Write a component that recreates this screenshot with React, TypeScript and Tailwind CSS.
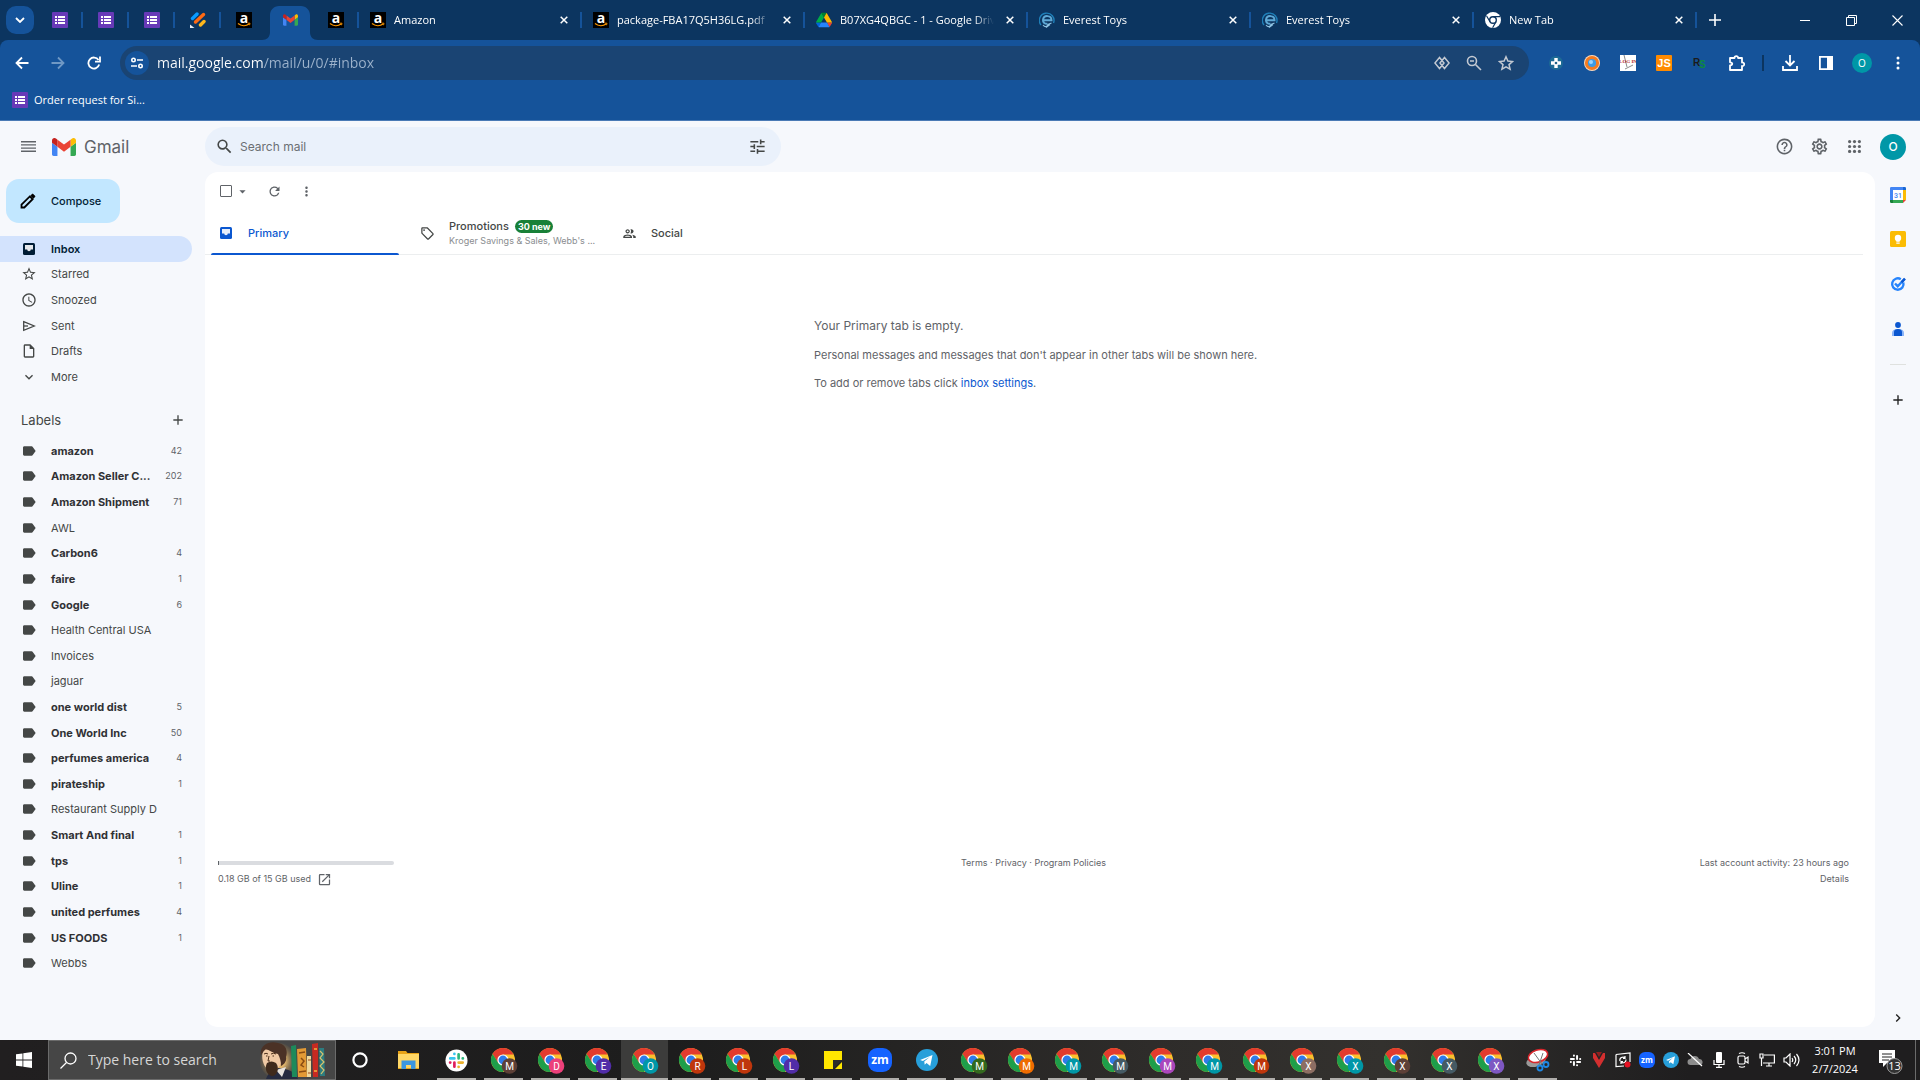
import { useState, type ReactNode } from 'react';
import {
  MdAdd,
  MdArrowDropDown,
  MdChevronRight,
  MdHelpOutline,
  MdKeyboardArrowDown,
  MdLabel,
  MdMoreVert,
  MdOpenInNew,
  MdOutlineGroup,
  MdOutlineInsertDriveFile,
  MdOutlineSell,
  MdOutlineSettings,
  MdRefresh,
  MdSchedule,
  MdSearch,
  MdStarBorder,
  MdTune,
} from 'react-icons/md';

/* ---------- favicons ---------- */

const FormsIcon = () => (
  <svg width="16" height="16" viewBox="0 0 16 16" className="shrink-0">
    <rect width="16" height="16" rx="1" fill="#673ab7" />
    <path d="M3 4h2v2H3zM3 7h2v2H3zM3 10h2v2H3zM6 4h7v2H6zM6 7h7v2H6zM6 10h7v2H6z" fill="#fff" />
  </svg>
);

const AmazonIcon = () => (
  <svg width="16" height="16" viewBox="0 0 16 16" className="shrink-0 overflow-visible">
    <rect width="16" height="16" fill="#000" />
    <text x="8" y="10.5" textAnchor="middle" fontSize="14" fontWeight="700" fill="#fff" fontFamily="Open Sans, sans-serif">
      a
    </text>
    <path d="M2 11.6c3.4 2.6 8 2.7 11 .5" fill="none" stroke="#f90" strokeWidth="1.3" />
    <path d="M11.8 11.2h2.2l-.5 2" fill="none" stroke="#f90" strokeWidth="0.9" />
  </svg>
);

const StripesIcon = () => (
  <svg width="16" height="16" viewBox="0 0 16 16" className="shrink-0" fill="none" strokeLinecap="round" strokeWidth="3.4">
    <path d="M2.5 6.5 7 2" stroke="#0a9bff" />
    <path d="M5.5 10 13.5 2.5" stroke="#ff6a13" />
    <path d="M10.5 13 14 9.5" stroke="#ffb71b" />
    <path d="M0 12.5V16h4.5z" fill="#e8edf5" stroke="none" />
  </svg>
);

const GmailMark = ({ width, height }: { width: number; height: number }) => (
  <svg width={width} height={height} viewBox="52 42 88 66" className="shrink-0">
    <path fill="#4285f4" d="M58 108h14V74L52 59v43c0 3.32 2.69 6 6 6" />
    <path fill="#34a853" d="M120 108h14c3.32 0 6-2.69 6-6V59l-20 15" />
    <path fill="#fbbc04" d="M120 48v26l20-15v-8c0-7.42-8.47-11.65-14.4-7.2" />
    <path fill="#ea4335" d="M72 74V48l24 18 24-18v26L96 92" />
    <path fill="#c5221f" d="M52 51v8l20 15V48l-5.6-4.2c-5.94-4.45-14.4-.22-14.4 7.2" />
  </svg>
);

const DriveIcon = () => (
  <svg width="16" height="16" viewBox="0 0 87.3 78" className="shrink-0">
    <path d="m6.6 66.85 3.85 6.65c.8 1.4 1.95 2.5 3.3 3.3L27.5 53H0c0 1.55.4 3.1 1.2 4.5z" fill="#0066da" />
    <path d="M43.65 25 29.9 1.2c-1.35.8-2.5 1.9-3.3 3.3L1.2 48.5C.4 49.9 0 51.45 0 53h27.5z" fill="#00ac47" />
    <path d="M73.55 76.8c1.35-.8 2.5-1.9 3.3-3.3l1.6-2.75 7.65-13.25c.8-1.4 1.2-2.95 1.2-4.5H59.8l5.85 11.5z" fill="#ea4335" />
    <path d="M43.65 25 57.4 1.2C56.05.4 54.5 0 52.9 0H34.4c-1.6 0-3.15.45-4.5 1.2z" fill="#00832d" />
    <path d="M59.8 53H27.5L13.75 76.8c1.35.8 2.9 1.2 4.5 1.2h50.8c1.6 0 3.15-.45 4.5-1.2z" fill="#2684fc" />
    <path d="m73.4 26.5-12.7-22c-.8-1.4-1.95-2.5-3.3-3.3L43.65 25 59.8 53h27.45c0-1.55-.4-3.1-1.2-4.5z" fill="#ffba00" />
  </svg>
);

const EverestIcon = () => (
  <svg width="16" height="16" viewBox="0 0 16 16" className="shrink-0" fill="none">
    <path d="M2 13A7.300 7.300 0 1 1 14.500 11" stroke="#1f7fb8" strokeWidth="1.400" />
    <path d="M4.300 8.200h8.200C12.500 3 4.500 2.600 4 8c-.2 2.500 2 4.200 4.500 3.800" stroke="#5fa9d6" strokeWidth="2" />
    <path d="M4 13c2 2.500 4 2 5-.5l3.500-1.500M7 15.500l4-3" stroke="#8fc3e3" strokeWidth="1.100" />
  </svg>
);

const ChromeMono = () => (
  <svg width="16" height="16" viewBox="0 0 16 16" className="shrink-0">
    <circle cx="8" cy="8" r="8" fill="#fff" />
    <circle cx="8" cy="8" r="3.3" fill="#fff" stroke="#0c3560" strokeWidth="1.4" />
    <path d="M8 4.6h7M5 9.8 1.6 4M11 9.8 7.6 15.7" stroke="#0c3560" strokeWidth="1.2" />
  </svg>
);

/* ---------- chrome ---------- */

const pinnedTabs = [
  { title: 'Order form 1', icon: <FormsIcon /> },
  { title: 'Order form 2', icon: <FormsIcon /> },
  { title: 'Order form 3', icon: <FormsIcon /> },
  { title: 'Stripes', icon: <StripesIcon /> },
  { title: 'Amazon pinned', icon: <AmazonIcon /> },
  { title: 'Gmail', icon: <GmailMark width={15} height={12} />, active: true },
  { title: 'Amazon orders', icon: <AmazonIcon /> },
];

const openTabs = [
  { title: 'Amazon', icon: <AmazonIcon /> },
  { title: 'package-FBA17Q5H36LG.pdf', icon: <AmazonIcon /> },
  { title: 'B07XG4QBGC - 1 - Google Drive', icon: <DriveIcon /> },
  { title: 'Everest Toys', icon: <EverestIcon /> },
  { title: 'Everest Toys', icon: <EverestIcon /> },
  { title: 'New Tab', icon: <ChromeMono /> },
];

const CloseGlyph = () => (
  <svg width="8" height="8" viewBox="0 0 8 8" stroke="#fff" strokeWidth="1.5">
    <path d="m.7.7 6.6 6.6M7.3.7.7 7.3" />
  </svg>
);

function TabStrip() {
  return (
    <div className="flex h-10 items-center bg-[#0c3560] text-white">
      <button aria-label="Search tabs" className="ml-[6px] mr-[3px] flex size-7 shrink-0 items-center justify-center rounded-[10px] bg-[#15539a]">
        <svg width="10" height="6" viewBox="0 0 10 6" fill="none" stroke="#fff" strokeWidth="1.8">
          <path d="m1 1 4 4 4-4" />
        </svg>
      </button>

      {pinnedTabs.map((tab, i) => (
        <button key={tab.title} aria-label={tab.title} className="relative flex h-10 w-[46px] shrink-0 items-center justify-center">
          {tab.active && (
            <svg className="absolute inset-x-[-5px] bottom-0" width="56" height="34" viewBox="0 0 56 34">
              <path d="M0 34c5 0 8-3 8-8V9c0-5 4-9 9-9h22c5 0 9 4 9 9v17c0 5 3 8 8 8z" fill="#15539a" />
            </svg>
          )}
          <span className="relative">{tab.icon}</span>
          {i !== 4 && i !== 5 && <span className="absolute right-0 top-3 h-4 w-[2px] bg-[#15539a]" />}
        </button>
      ))}

      {openTabs.map((tab, i) => (
        <div key={i} className="relative flex h-10 w-[223px] min-w-0 items-center pl-[11px] pr-[14px]">
          {tab.icon}
          <button className="ml-2 min-w-0 flex-1 overflow-hidden whitespace-nowrap text-left text-[11px] leading-[18px] [mask-image:linear-gradient(90deg,#000_calc(100%-20px),transparent)]">
            {tab.title}
          </button>
          <button aria-label="Close tab" className="ml-3 shrink-0">
            <CloseGlyph />
          </button>
          <span className="absolute right-0 top-3 h-4 w-[2px] bg-[#15539a]" />
        </div>
      ))}

      <button aria-label="New tab" className="ml-3">
        <svg width="12" height="12" viewBox="0 0 12 12" stroke="#fff" strokeWidth="1.6">
          <path d="M6 0v12M0 6h12" />
        </svg>
      </button>

      <div className="ml-auto flex">
        <button aria-label="Minimize" className="flex h-10 w-[46px] items-center justify-center">
          <span className="h-px w-[10px] bg-white" />
        </button>
        <button aria-label="Restore" className="flex h-10 w-[46px] items-center justify-center">
          <svg width="11" height="11" viewBox="0 0 11 11" fill="none" stroke="#fff">
            <path d="M.5 2.5h8v8h-8zM2.500 2.500v-2h8v8h-2" />
          </svg>
        </button>
        <button aria-label="Close window" className="flex h-10 w-[46px] items-center justify-center">
          <svg width="11" height="11" viewBox="0 0 11 11" stroke="#fff" strokeWidth="1.1">
            <path d="m.5.5 10 10M10.5.5l-10 10" />
          </svg>
        </button>
      </div>
    </div>
  );
}

const extensions: { name: string; icon: ReactNode }[] = [
  {
    name: 'Helper',
    icon: (
      <svg width="16" height="16" viewBox="0 0 16 16">
        <circle cx="8" cy="8" r="7" fill="#1d6b95" />
        <path d="M8 3v10M3 8h10" stroke="#fff" strokeWidth="3.4" />
        <circle cx="8" cy="8" r="1.3" fill="#1d6189" />
      </svg>
    ),
  },
  {
    name: 'Tracker',
    icon: (
      <svg width="16" height="16" viewBox="0 0 16 16">
        <circle cx="8" cy="8" r="8" fill="#ffd9b8" />
        <circle cx="8" cy="8" r="5.6" fill="#3c9be6" stroke="#f47b20" strokeWidth="3" />
        <circle cx="7" cy="7" r="2" fill="#9ad4ff" />
      </svg>
    ),
  },
  {
    name: 'Log in',
    icon: (
      <svg width="16" height="16" viewBox="0 0 16 16">
        <rect width="16" height="16" fill="#fff" />
        <path d="m4 0 3 12M5 14l8-4" stroke="#8a8a8a" strokeWidth="1" />
        <text x="8" y="8" textAnchor="middle" fontSize="5" fontWeight="700" fill="#b3282d" fontFamily="Liberation Serif, serif">
          LOG IN
        </text>
      </svg>
    ),
  },
  {
    name: 'JS',
    icon: (
      <svg width="16" height="16" viewBox="0 0 16 16">
        <rect width="16" height="16" rx="1" fill="#ff8a00" />
        <text x="8" y="12" textAnchor="middle" fontSize="11" fontWeight="700" fill="#fff" fontFamily="Liberation Sans, sans-serif">
          JS
        </text>
      </svg>
    ),
  },
  {
    name: 'RS',
    icon: (
      <svg width="16" height="16" viewBox="0 0 16 16" fontFamily="Liberation Sans, sans-serif" fontWeight="700">
        <text x="1" y="11" fontSize="10" fill="#1b1b1b">R</text>
        <text x="7" y="13" fontSize="10" fill="#0d8a3e">S</text>
      </svg>
    ),
  },
  {
    name: 'Extensions',
    icon: (
      <svg width="18" height="18" viewBox="0 0 18 18" fill="none" stroke="#fff" strokeWidth="1.8">
        <path d="M3 4h4.500a1.800 1.800 0 1 1 3.600 0H15v4.500a1.800 1.800 0 1 1 0 3.500v4H3v-4.500c3-.5 3-2.800 0-3.200z" strokeLinejoin="round" />
      </svg>
    ),
  },
];

function Toolbar() {
  const [url, setUrl] = useState('mail.google.com/mail/u/0/#inbox');

  return (
    <div className="bg-[#0c3560]">
      <div className="flex h-[46px] items-center rounded-t-lg bg-[#15539a] text-white">
        <button aria-label="Back" className="ml-1 flex size-9 items-center justify-center">
          <svg width="14" height="14" viewBox="0 0 14 14" fill="none" stroke="#fff" strokeWidth="1.8">
            <path d="M13.500 7H2M7 1.500 1.500 7 7 12.500" />
          </svg>
        </button>
        <button aria-label="Forward" className="flex size-9 items-center justify-center">
          <svg width="14" height="14" viewBox="0 0 14 14" fill="none" stroke="#6f98c4" strokeWidth="1.8">
            <path d="M.5 7H12M7 1.500 12.500 7 7 12.500" />
          </svg>
        </button>
        <button aria-label="Reload" className="flex size-9 items-center justify-center">
          <svg width="14" height="14" viewBox="0 0 14 14" fill="none" stroke="#fff" strokeWidth="1.8">
            <path d="M12.200 8.500A5.500 5.500 0 1 1 11.500 4" />
            <path d="M13 .5V5.600H8" />
          </svg>
        </button>

        <div className="ml-2 mr-[9px] flex h-[34px] flex-1 items-center rounded-full bg-[#1a4473] pl-[5px] pr-[15px]">
          <button aria-label="Site information" className="flex size-6 shrink-0 items-center justify-center rounded-full bg-[#15539a]">
            <svg width="12" height="12" viewBox="0 0 12 12" fill="none" stroke="#fff" strokeWidth="1.6">
              <circle cx="2.500" cy="3" r="1.700" />
              <path d="M6 3h6M0 9h6" />
              <circle cx="9.500" cy="9" r="1.700" />
            </svg>
          </button>
          <input
            aria-label="Address"
            value={url}
            onChange={(e) => setUrl(e.target.value)}
            className="ml-2 min-w-0 flex-1 bg-[linear-gradient(90deg,#fff_107px,#9db3cc_107px)] bg-clip-text text-[14px] leading-5 text-transparent outline-none"
          />
          <div className="flex items-center gap-4">
            <button aria-label="Preview">
              <svg width="16" height="16" viewBox="0 0 16 16" fill="none" stroke="#c3c9d2" strokeWidth="1.500">
                <path d="M5.500 2.500.9 8l4.600 5.500L10 8zM10.500 2.500 15.100 8l-4.600 5.500L6 8z" />
              </svg>
            </button>
            <button aria-label="Zoom">
              <svg width="16" height="16" viewBox="0 0 16 16" fill="none" stroke="#c3c9d2" strokeWidth="1.6">
                <circle cx="6" cy="6" r="4.500" />
                <path d="M9.500 9.500 15 15M4 6h4" />
              </svg>
            </button>
            <button aria-label="Bookmark this tab">
              <svg width="16" height="16" viewBox="0 0 16 16" fill="none" stroke="#c3c9d2" strokeWidth="1.5">
                <path d="m8 1.800 1.900 4.300 4.600.4-3.500 3.100 1.100 4.600L8 11.800l-4.100 2.400L5 9.600 1.500 6.500l4.600-.4z" />
              </svg>
            </button>
          </div>
        </div>

        {extensions.map((ext) => (
          <button key={ext.name} aria-label={ext.name} className="flex size-9 items-center justify-center">
            {ext.icon}
          </button>
        ))}
        <span className="mx-2 h-4 w-[2px] bg-[#0c3560]" />
        <button aria-label="Downloads" className="flex size-9 items-center justify-center">
          <svg width="16" height="16" viewBox="0 0 16 16" fill="none" stroke="#fff" strokeWidth="1.8">
            <path d="M8 0v10M3.500 6 8 10.500 12.500 6M1 11v4h14v-4" />
          </svg>
        </button>
        <button aria-label="Side panel" className="flex size-9 items-center justify-center">
          <svg width="14" height="14" viewBox="0 0 14 14" fill="none" stroke="#fff" strokeWidth="1.8">
            <path d="M.9.9h12.200v12.200H.9z" />
            <path d="M8 1h5v12H8z" fill="#fff" stroke="none" />
          </svg>
        </button>
        <button aria-label="Profile" className="flex size-9 items-center justify-center">
          <span className="flex size-5 items-center justify-center rounded-full bg-[#0097a7] text-[10px] leading-4">O</span>
        </button>
        <button aria-label="Chrome menu" className="mr-1 flex size-9 items-center justify-center">
          <svg width="4" height="14" viewBox="0 0 4 14" fill="#fff">
            <circle cx="2" cy="2" r="1.5" />
            <circle cx="2" cy="7" r="1.5" />
            <circle cx="2" cy="12" r="1.5" />
          </svg>
        </button>
      </div>

      <div className="flex h-[35px] items-start border-b border-[#4a7ab5] bg-[#15539a] pl-3 pt-[6px] text-white">
        <a href="#order" className="flex items-center gap-[6px] text-[11px] leading-4">
          <FormsIcon />
          Order request for Si...
        </a>
      </div>
    </div>
  );
}

/* ---------- gmail ---------- */

const InboxIcon = ({ className }: { className?: string }) => (
  <svg width="16" height="16" viewBox="0 0 16 16" className={className}>
    <rect x="2" y="2" width="12" height="12" rx="1.5" fill="currentColor" />
    <path d="M4 4h8v4.500H9.800a1.800 1.800 0 0 1-3.600 0H4z" fill="#fff" fillOpacity="0.9" />
  </svg>
);

const SentIcon = ({ className }: { className?: string }) => (
  <svg width="16" height="16" viewBox="0 0 16 16" className={className} fill="none" stroke="currentColor" strokeWidth="1.300">
    <path d="M2.700 3.700 13.200 8 2.700 12.300z" />
    <path d="M3 8h4" />
  </svg>
);

const folders = [
  { name: 'Inbox', icon: InboxIcon },
  { name: 'Starred', icon: MdStarBorder },
  { name: 'Snoozed', icon: MdSchedule },
  { name: 'Sent', icon: SentIcon },
  { name: 'Drafts', icon: MdOutlineInsertDriveFile },
  { name: 'More', icon: MdKeyboardArrowDown },
];

const labels: [string, number?][] = [
  ['amazon', 42],
  ['Amazon Seller C...', 202],
  ['Amazon Shipment', 71],
  ['AWL'],
  ['Carbon6', 4],
  ['faire', 1],
  ['Google', 6],
  ['Health Central USA'],
  ['Invoices'],
  ['jaguar'],
  ['one world dist', 5],
  ['One World Inc', 50],
  ['perfumes america', 4],
  ['pirateship', 1],
  ['Restaurant Supply D'],
  ['Smart And final', 1],
  ['tps', 1],
  ['Uline', 1],
  ['united perfumes', 4],
  ['US FOODS', 1],
  ['Webbs'],
];

const dots = [1.6, 6.5, 11.4];

function GmailHeader() {
  return (
    <header className="flex h-[51px] shrink-0 items-center">
      <div className="flex w-[205px] shrink-0 items-center pl-[21px]">
        <button aria-label="Main menu">
          <svg width="15" height="11" viewBox="0 0 15 11" fill="#5f6368">
            <path d="M0 0h15v1.400H0zM0 3.200h15v1.400H0zM0 6.400h15v1.400H0zM0 9.600h15V11H0z" />
          </svg>
        </button>
        <a href="#inbox" className="ml-4 flex items-center gap-2 text-[17px] leading-6 text-[#5f6368]">
          <GmailMark width={24} height={18} />
          Gmail
        </a>
      </div>
      <form className="flex h-[39px] w-[576px] items-center rounded-full bg-[#eaf1fb] pl-[10px] pr-[14px]" onSubmit={(e) => e.preventDefault()}>
        <button aria-label="Search">
          <MdSearch size={19} color="#444746" />
        </button>
        <input
          aria-label="Search mail"
          placeholder="Search mail"
          className="ml-[6px] min-w-0 flex-1 bg-transparent text-[12px] leading-5 outline-none placeholder:text-[#6b6f73]"
        />
        <button type="button" aria-label="Search options">
          <MdTune size={19} color="#444746" />
        </button>
      </form>
      <div className="ml-auto flex items-center pr-[14px] text-[#5f6368]">
        <button aria-label="Support" className="flex w-[35px] justify-center">
          <MdHelpOutline size={19} />
        </button>
        <button aria-label="Settings" className="flex w-[35px] justify-center">
          <MdOutlineSettings size={19} />
        </button>
        <button aria-label="Google apps" className="flex w-[35px] justify-center">
          <svg width="13" height="13" viewBox="0 0 13 13" fill="#5f6368">
            {dots.map((y) => dots.map((x) => <circle key={`${x}-${y}`} cx={x} cy={y} r="1.6" />))}
          </svg>
        </button>
        <button aria-label="Google account" className="ml-2 flex size-[26px] items-center justify-center rounded-full bg-[#0097a7] text-[12px] font-medium leading-4 text-white">
          O
        </button>
      </div>
    </header>
  );
}

function Sidebar() {
  return (
    <nav className="w-[205px] shrink-0 text-[#444746]">
      <button className="ml-[6px] mt-[7px] flex h-11 w-[114px] items-center rounded-[13px] bg-[#c2e7ff] pl-[14px] text-[11px] font-medium leading-4 text-[#001d35]">
        <svg width="16" height="16" viewBox="0 0 16 16" fill="none" stroke="#000" strokeWidth="1.8">
          <path d="M1.500 14.500v-2.800L9.800 3.400l2.800 2.800-8.300 8.300z" />
          <path d="m10.500 2.700 1.600-1.500c.4-.3.8-.3 1.100 0l1.600 1.600c.3.4.3.8 0 1.100l-1.500 1.600z" fill="#000" strokeWidth="0.5" />
        </svg>
        <span className="ml-[15px]">Compose</span>
      </button>

      <ul className="mt-[13px] grid h-[154px] grid-rows-6">
        {folders.map(({ name, icon: Icon }) => {
          const active = name === 'Inbox';
          return (
            <li key={name}>
              <a
                href={`#${name}`}
                className={`mr-[13px] flex h-full items-center rounded-r-full pl-[21px] text-[11px] leading-4 ${
                  active ? 'bg-[#d3e3fd] font-semibold text-[#001d35]' : ''
                }`}
              >
                <Icon className="mr-[14px] size-4" />
                {name}
              </a>
            </li>
          );
        })}
      </ul>

      <div className="mt-[18px] flex h-6 items-center justify-between pl-[21px] pr-[19px]">
        <h2 className="text-[13px] leading-5">Labels</h2>
        <button aria-label="Create new label">
          <MdAdd size={16} />
        </button>
      </div>

      <ul className="mt-[6px] grid h-[538px] grid-rows-[repeat(21,minmax(0,1fr))]">
        {labels.map(([name, count]) => (
          <li key={name}>
            <a href={`#${name}`} className="flex h-full items-center pl-[21px] pr-[23px] text-[11px] leading-4">
              <MdLabel size={16} className="mr-[14px] shrink-0" />
              <span className={`whitespace-nowrap ${count ? 'font-bold text-[#303134]' : ''}`}>{name}</span>
              <span className="ml-auto text-[9px] text-[#5f6368]">{count}</span>
            </a>
          </li>
        ))}
      </ul>
    </nav>
  );
}

function InboxTab({ icon, title, active, badge, sub }: { icon: ReactNode; title: string; active?: boolean; badge?: string; sub?: string }) {
  return (
    <button
      role="tab"
      aria-selected={!!active}
      className={`relative mr-[14px] flex h-11 w-[188px] items-center pl-[7px] text-left ${active ? 'text-[#0b57d0]' : 'text-[#444746]'}`}
    >
      {icon}
      <span className="ml-[14px] min-w-0">
        <span className="flex items-center gap-[6px] text-[11px] font-medium leading-4">
          {title}
          {badge && <span className="rounded-full bg-[#188038] px-[3px] text-[9px] font-bold leading-[13px] text-white">{badge}</span>}
        </span>
        {sub && <span className="block whitespace-nowrap text-[9px] leading-[14px] text-[#8a8d90]">{sub}</span>}
      </span>
      {active && <span className="absolute inset-x-0 bottom-0 h-[2px] rounded-t bg-[#0b57d0]" />}
    </button>
  );
}

function MailPanel() {
  return (
    <main className="mb-[13px] flex flex-1 flex-col rounded-[13px] bg-white text-[#5f6368]">
      <div className="flex h-[38px] items-center pl-[15px]">
        <input type="checkbox" aria-label="Select all" className="size-3 appearance-none rounded-[1px] border-[1.5px] border-[#5f6368]" />
        <button aria-label="Select" className="ml-[3px]">
          <MdArrowDropDown size={15} />
        </button>
        <button aria-label="Refresh" className="ml-[17px]">
          <MdRefresh size={15} />
        </button>
        <button aria-label="More actions" className="ml-[17px]">
          <MdMoreVert size={15} />
        </button>
      </div>

      <div role="tablist" className="mr-3 mt-px flex h-11 border-b border-[#eceeef] pl-[6px]">
        <InboxTab icon={<InboxIcon />} title="Primary" active />
        <InboxTab icon={<MdOutlineSell size={15} />} title="Promotions" badge="30 new" sub="Kroger Savings & Sales, Webb's ..." />
        <InboxTab icon={<MdOutlineGroup size={15} />} title="Social" />
      </div>

      <div className="mr-3 flex-1">
        <div className="mx-auto mt-[61px] w-[440px] whitespace-nowrap text-[11px] leading-4">
          <p className="text-[12px] leading-5">Your Primary tab is empty.</p>
          <p className="mt-[11px]">Personal messages and messages that don't appear in other tabs will be shown here.</p>
          <p className="mt-3">
            To add or remove tabs click{' '}
            <a href="#settings" className="text-[#0b57d0]">
              inbox settings
            </a>
            .
          </p>
        </div>
      </div>

      <footer className="mb-[140px] ml-[13px] mr-[26px] grid grid-cols-3 text-[9px] leading-4">
        <div>
          <div className="mt-[6px] h-1 w-[176px] rounded-full bg-[#dadce0]">
            <div className="h-1 w-px bg-[#5f6368]" />
          </div>
          <a href="#storage" className="mt-[6px] flex items-center gap-[6px]">
            0.18 GB of 15 GB used
            <MdOpenInNew size={15} />
          </a>
        </div>
        <div className="text-center">
          <a href="#terms">Terms</a> · <a href="#privacy">Privacy</a> · <a href="#policies">Program Policies</a>
        </div>
        <div className="text-right">
          <p>Last account activity: 23 hours ago</p>
          <a href="#details">Details</a>
        </div>
      </footer>
    </main>
  );
}

function SidePanel() {
  return (
    <aside className="flex w-[45px] shrink-0 flex-col items-center">
      <button aria-label="Calendar" className="mt-[15px]">
        <svg width="16" height="16" viewBox="0 0 16 16">
          <path d="M0 1.200Q0 0 1.200 0H13v3H3v10H0z" fill="#4285f4" />
          <path d="M13 0h1.800Q16 0 16 1.200V3h-3z" fill="#1967d2" />
          <path d="M13 3h3v10h-3z" fill="#fbbc04" />
          <path d="M3 13h10v3H3z" fill="#34a853" />
          <path d="M0 13h3v3H1.200Q0 16 0 14.800z" fill="#188038" />
          <path d="M13 13h3l-3 3z" fill="#ea4335" />
          <path d="M3 3h10v10H3z" fill="#fff" />
          <text x="8" y="10.6" textAnchor="middle" fontSize="7" fontWeight="500" fill="#4285f4" fontFamily="Roboto, sans-serif">
            31
          </text>
        </svg>
      </button>
      <button aria-label="Keep" className="mt-7">
        <svg width="16" height="16" viewBox="0 0 16 16">
          <rect width="16" height="16" rx="1.5" fill="#fbbc04" />
          <circle cx="8" cy="7" r="3.2" fill="#fff" />
          <path d="M6.300 9h3.400v1.800H6.300zM6.300 11.500h3.400v1.200H6.300z" fill="#fff" />
        </svg>
      </button>
      <button aria-label="Tasks" className="mt-[29px]">
        <svg width="16" height="16" viewBox="0 0 16 16" fill="none">
          <path d="M13.300 6.500A5.700 5.700 0 1 1 10.800 3.200" stroke="#2684fc" strokeWidth="2.4" />
          <path d="m5 7.500 2.700 2.700L14.500 3" stroke="#2684fc" strokeWidth="2.4" />
          <path d="m11.500 6.300 3.500-3.600" stroke="#0b57d0" strokeWidth="2.4" />
        </svg>
      </button>
      <button aria-label="Contacts" className="mt-[29px]">
        <svg width="16" height="16" viewBox="0 0 16 16">
          <path d="M2 15v-3c0-2.500 2-4 6-4s6 1.500 6 4v3z" fill="#8ab4f8" />
          <circle cx="8" cy="4" r="2.9" fill="#0b57d0" />
          <path d="M4 15v-4c0-2 1.500-3 4-3s4 1 4 3v4z" fill="#0b57d0" />
        </svg>
      </button>
      <span className="mt-[27px] h-px w-4 bg-[#dfe1df]" />
      <button aria-label="Get add-ons" className="mt-[27px] text-[#1f1f1f]">
        <MdAdd size={16} />
      </button>
      <button aria-label="Hide side panel" className="mb-[14px] mt-auto text-[#1f1f1f]">
        <MdChevronRight size={16} />
      </button>
    </aside>
  );
}

/* ---------- taskbar ---------- */

const ChromeIcon = ({ letter, color }: { letter: string; color: string }) => (
  <svg width="28" height="28" viewBox="0 0 28 28">
    <circle cx="13" cy="14" r="12" fill="#fbc02d" />
    <path d="M13 8.400h10.600A12 12 0 0 0 2.600 8l5.500 9z" fill="#e33b2e" />
    <path d="M2.600 8A12 12 0 0 0 13 26l5-9.200-9.800 0z" fill="#1e9e4a" />
    <circle cx="13" cy="14" r="5.600" fill="#fff" />
    <circle cx="13" cy="14" r="4.400" fill="#2f7bea" />
    <circle cx="19.500" cy="20" r="7.800" fill={color} />
    <text x="19.5" y="23.5" textAnchor="middle" fontSize="10" fill="#fff" fontFamily="Roboto, sans-serif">
      {letter}
    </text>
  </svg>
);

const SlackIcon = ({ mono, size }: { mono?: boolean; size: number }) => {
  const c = mono ? ['#fff', '#fff', '#fff', '#fff'] : ['#36c5f0', '#2eb67d', '#ecb22e', '#e01e5a'];
  return (
    <svg width={size} height={size} viewBox="0 0 24 24" fill="none" strokeLinecap="round" strokeWidth="2.8">
      {!mono && <circle cx="12" cy="12" r="11.5" fill="#fff" />}
      <path d="M5.500 9.800h4.300M9.800 5v.2" stroke={c[0]} />
      <path d="M14.200 5.500v4.300M18.500 9.800h.2" stroke={c[1]} />
      <path d="M18.500 14.200h-4.300M14.200 18.800v-.2" stroke={c[2]} />
      <path d="M9.800 18.500v-4.300M5.500 14.200h-.2" stroke={c[3]} />
    </svg>
  );
};

const ZoomIcon = ({ size }: { size: number }) => (
  <svg width={size} height={size} viewBox="0 0 24 24">
    <rect width="24" height="24" rx="9" fill="#1563ff" />
    <text x="12" y="16" textAnchor="middle" fontSize="12" fontWeight="700" fill="#fff" fontFamily="Open Sans, sans-serif">
      zm
    </text>
  </svg>
);

const TelegramIcon = ({ size }: { size: number }) => (
  <svg width={size} height={size} viewBox="0 0 24 24">
    <circle cx="12" cy="12" r="12" fill="#279fda" />
    <path d="m4.500 12 13.500-5.500-2.500 12-4-3.200-2 2-.5-3.600 6-5-7.500 4.300z" fill="#fff" />
  </svg>
);

const StickyIcon = () => (
  <svg width="18" height="18" viewBox="0 0 18 18">
    <path d="M0 0h18v9h-9v9H0z" fill="#ffe600" />
    <path d="M9 18V9h9z" fill="#2a2a2a" />
    <path d="m11 18 7-7v7z" fill="#ffe600" />
  </svg>
);

const SnipIcon = () => (
  <svg width="26" height="26" viewBox="0 0 26 26" fill="none">
    <ellipse cx="11" cy="14" rx="10" ry="5.5" fill="#9a9a9a" transform="rotate(-18 11 14)" />
    <ellipse cx="13" cy="9" rx="10" ry="6" fill="#fff" stroke="#d8262c" strokeWidth="1.6" transform="rotate(-18 13 9)" />
    <path d="m9 6 8 11M18 6l-4 12" stroke="#777" />
    <circle cx="15" cy="21" r="2.5" stroke="#1e88e5" strokeWidth="1.8" />
    <circle cx="21" cy="17.5" r="2.5" stroke="#1e88e5" strokeWidth="1.8" />
  </svg>
);

const chrome = (letter: string, color: string) => <ChromeIcon letter={letter} color={color} />;

const runningApps: ReactNode[] = [
  <SlackIcon size={23} />,
  chrome('M', '#5d4037'),
  chrome('D', '#ec407a'),
  chrome('E', '#512da8'),
  chrome('O', '#0097a7'),
  chrome('R', '#bf360c'),
  chrome('L', '#bf360c'),
  chrome('L', '#512da8'),
  <StickyIcon />,
  <ZoomIcon size={24} />,
  <TelegramIcon size={22} />,
  chrome('M', '#33691e'),
  chrome('M', '#ef6c00'),
  chrome('M', '#0097a7'),
  chrome('M', '#455a64'),
  chrome('M', '#ab47bc'),
  chrome('M', '#0097a7'),
  chrome('M', '#bf360c'),
  chrome('X', '#8d6e63'),
  chrome('X', '#0097a7'),
  chrome('X', '#5d4037'),
  chrome('X', '#455a64'),
  chrome('X', '#7e57c2'),
  <SnipIcon />,
];

const trayIcons: ReactNode[] = [
  <SlackIcon mono size={17} />,
  <svg width="12" height="16" viewBox="0 0 12 16">
    <path d="M0 1h2l4 7 4-7h2v5L6 16 0 6z" fill="#d32f2f" />
    <path d="M3 0h6L6 5z" fill="#8e2020" />
  </svg>,
  <svg width="16" height="16" viewBox="0 0 16 16" fill="none" stroke="#fff" strokeWidth="1.2">
    <path d="M1 2.500 15 1v9M1 2.500v12l8-.5M5 9a3 3 0 0 1 5-3M10 4v2.500H8M11 7.500A3 3 0 0 1 6 10M6 12V9.500h2" />
    <circle cx="12.5" cy="12.5" r="3" fill="#e81123" stroke="none" />
  </svg>,
  <ZoomIcon size={16} />,
  <TelegramIcon size={16} />,
  <svg width="16" height="14" viewBox="0 0 16 14">
    <path d="M3.500 12a3 3 0 0 1 0-6 4.500 4.500 0 0 1 8.500 0 3 3 0 0 1 1 6z" fill="#8d8d8d" />
    <path d="m1 0 14 13" stroke="#fff" strokeWidth="1.2" />
  </svg>,
  <svg width="12" height="16" viewBox="0 0 12 16" fill="none" stroke="#fff" strokeWidth="1.2">
    <rect x="3" y="0" width="6" height="11" rx="1" fill="#fff" stroke="none" />
    <path d="M1 8v4.500h10V8M6 12.500V15M3 15.400h6" />
  </svg>,
  <svg width="14" height="16" viewBox="0 0 14 16" fill="none" stroke="#fff" strokeWidth="1.2">
    <rect x="2" y="4" width="7" height="8" rx="1.5" />
    <path d="m9 7 3-2v6L9 9M3 1.500Q6 0 9 1.500M3 14.500q3 1.500 6 0" />
  </svg>,
  <svg width="16" height="14" viewBox="0 0 16 14" fill="none" stroke="#fff" strokeWidth="1.2">
    <path d="M5 2h10.400v8H4M7 13h6M10 10v3M1 1h3v4H1zM2.500 5v8" />
  </svg>,
  <svg width="17" height="14" viewBox="0 0 17 14" fill="none" stroke="#fff" strokeWidth="1.2">
    <path d="M1 5h2l4-4v12L3 9H1zM9 5q1.500 2 0 4M11 3q3.500 4 0 8M13.500 1q5 6 0 12" />
  </svg>,
];

const SearchArt = () => (
  <svg width="68" height="38" viewBox="0 0 68 38" className="ml-auto mr-[9px] self-end">
    <defs>
      <radialGradient id="lamp">
        <stop offset="0.4" stopColor="#e0b56c" />
        <stop offset="1" stopColor="#6b5a42" stopOpacity="0.3" />
      </radialGradient>
    </defs>
    <circle cx="20" cy="20" r="18" fill="url(#lamp)" />
    <path d="M8 38c2-6 5-8 12-11 9 1 18 3 20 11z" fill="#262b40" />
    <path d="m18 29 6 7 4-10z" fill="#e8e4de" />
    <path d="M5 9c5-6 15-6 19 1 1 8 0 13-5 18H9C5 24 3 17 5 9z" fill="#f0c9a4" />
    <path d="M3 14C1 4 12-1 20 2c8 1 10 8 8 14 1 4-2 8-5 9 0-5-1-8-3-12-6-1-11-6-13-4-2 1-2 3-4 5z" fill="#4b3226" />
    <path d="M9 22c3-2 6-2 9 0 4 5 1 13-4 13-5-1-8-7-5-13z" fill="#3f2a1c" />
    <path d="M6 13q2-1.500 4 0M13 13q2.500-1.500 5 0M8 15h1.500M14.500 15H16M11 15l-1 5h2" stroke="#4a2d18" fill="none" />
    <path d="m33 5 5-1 1 32h-5z" fill="#1d8a5b" />
    <path d="m39 8 9-1 1 29h-9z" fill="#e39a35" />
    <path d="m41 12 6-1M41 31l7-1M43 17l3 3-3 4 3 2" stroke="#8a4c12" strokeWidth="1.500" fill="none" />
    <path d="M49 15h4v21h-4z" fill="#f0d89a" />
    <path d="M50 19h3M50 32h3" stroke="#a34a20" />
    <path d="m54 3 6-1v34h-5z" fill="#c62a22" />
    <path d="M56 8h3M56 30h3" stroke="#f5b53a" strokeWidth="1.5" />
    <path d="M61 7h5l1 28h-5z" fill="#2d7c80" />
    <path d="m62 10 3 3-3 4 4 4-4 4 4 4-3 4" stroke="#d8c26c" fill="none" strokeWidth="1.2" />
  </svg>
);

function Taskbar() {
  return (
    <div className="flex h-10 shrink-0 items-center bg-[linear-gradient(90deg,#211f20,#1d1d1d_35%,#2e2c2a_60%,#33312e_72%,#1f1e1f_88%)] font-['Open_Sans','Noto_Sans',sans-serif] text-white">
      <button aria-label="Start" className="flex h-10 w-12 shrink-0 items-center justify-center">
        <svg width="16" height="16" viewBox="0 0 16 16" fill="#fff">
          <path d="m0 2.300 6.500-.9v6.200H0zM7.300 1.300 16 0v7.600H7.300zM0 8.400h6.500v6.200L0 13.700zM7.300 8.400H16V16l-8.700-1.300z" />
        </svg>
      </button>
      <div className="flex h-10 w-[288px] shrink-0 items-center border border-[#6b6b6b] bg-[#464646] pl-[11px]">
        <svg width="17" height="17" viewBox="0 0 17 17" fill="none" stroke="#fff" strokeWidth="1.3">
          <circle cx="10.5" cy="6.5" r="5.5" />
          <path d="m6.500 10.500-6 6" />
        </svg>
        <input
          aria-label="Type here to search"
          placeholder="Type here to search"
          className="ml-[11px] w-[150px] bg-transparent text-[14px] leading-5 outline-none placeholder:text-[#d6d6d6]"
        />
        <SearchArt />
      </div>
      <button aria-label="Cortana" className="flex h-10 w-12 shrink-0 items-center justify-center">
        <svg width="16" height="16" viewBox="0 0 16 16" fill="none">
          <circle cx="8" cy="8" r="6.6" stroke="#fff" strokeWidth="2.2" />
        </svg>
      </button>
      <button aria-label="File Explorer" className="flex h-10 w-[49px] shrink-0 items-center justify-center">
        <svg width="21" height="18" viewBox="0 0 21 18">
          <path d="M0 0h8l1.500 2H21v16H0z" fill="#e8a317" />
          <path d="M0 3h21v14H0z" fill="#ffd766" />
          <path d="M3.500 18V9.500h14V18H13v-4H8v4z" fill="#3b97e0" />
        </svg>
      </button>

      <div className="flex min-w-0">
        {runningApps.map((icon, i) => (
          <button key={i} aria-label={`Window ${i + 1}`} className={`relative flex h-10 w-[47px] items-center justify-center ${i === 4 ? 'bg-[#3c3c3b]' : ''}`}>
            {icon}
            <span className={`absolute bottom-0 h-[2px] bg-[#b0aeab] ${i === 4 ? 'inset-x-0' : 'inset-x-[4px]'}`} />
          </button>
        ))}
      </div>

      <div className="ml-auto flex items-center">
        {trayIcons.map((icon, i) => (
          <button key={i} aria-label={`Tray ${i + 1}`} className="flex h-10 w-6 items-center justify-center">
            {icon}
          </button>
        ))}
        <button className="flex w-[64px] flex-col items-center text-[11px] leading-[18px]">
          <span>3:01 PM</span>
          <span>2/7/2024</span>
        </button>
        <button aria-label="Notifications" className="relative ml-3 flex h-10 w-[36px] items-center">
          <svg width="28" height="28" viewBox="0 0 28 28">
            <path d="M0 4h16v13H8l-4 4v-4H0z" fill="#fff" />
            <path d="M3 8h10M3 11h10M3 14h7" stroke="#222" />
            <circle cx="15.500" cy="20" r="7.500" fill="#333" stroke="#9a9a9a" />
            <text x="15.5" y="24" textAnchor="middle" fontSize="11" fill="#fff" fontFamily="Open Sans, sans-serif">
              13
            </text>
          </svg>
        </button>
        <span className="mr-1 h-10 w-px bg-[#6b6b6b]" />
      </div>
    </div>
  );
}

export default function App() {
  return (
    <div className="flex h-screen flex-col overflow-hidden">
      <div className="shrink-0 font-['Open_Sans','Noto_Sans',sans-serif]">
        <TabStrip />
        <Toolbar />
      </div>
      <div className="flex min-h-0 flex-1 flex-col bg-[#f6f8fc] font-['Inter','Roboto',sans-serif]">
        <GmailHeader />
        <div className="flex min-h-0 flex-1">
          <Sidebar />
          <MailPanel />
          <SidePanel />
        </div>
      </div>
      <Taskbar />
    </div>
  );
}
